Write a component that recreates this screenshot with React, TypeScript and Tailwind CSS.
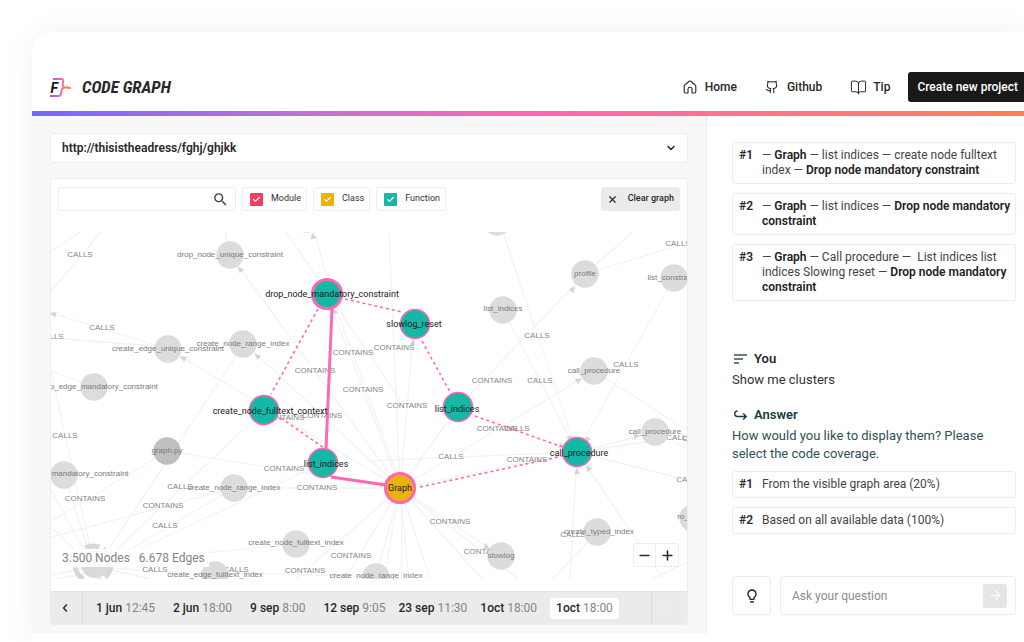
import React from 'react';
import { BookOpen, ChevronDown, ChevronLeft, ChevronRight, Github, Minus, Plus, X, Check, ArrowRight } from 'lucide-react';
import { MdSearch, MdOutlineLightbulb } from 'react-icons/md';

type Line = [number, number, number, number];
type Label = [string, number, number];
type GraphNode = { x: number; y: number; label?: string; lx?: number; ly?: number; dark?: boolean };

const edges: Line[] = [
  [51, 251, 81, 232], [51, 291, 101, 232], [51, 313, 168, 349], [51, 338, 168, 347], [51, 371, 94, 387],
  [51, 371, 95, 570], [225, 232, 230, 255], [315, 232, 327, 280], [286, 232, 400, 400], [239, 267, 400, 488],
  [180, 356, 400, 488], [254, 352, 400, 488], [236, 356, 95, 570], [264, 410, 95, 570], [323, 463, 95, 570],
  [167, 451, 51, 521], [167, 451, 400, 488], [234, 488, 51, 537], [234, 488, 95, 570], [64, 475, 95, 570],
  [51, 490, 95, 570], [51, 527, 95, 570], [51, 575, 95, 566], [51, 580, 95, 572], [150, 579, 95, 566],
  [234, 488, 400, 488], [332, 308, 400, 488], [336, 308, 402, 488], [389, 232, 400, 488], [413, 340, 400, 488],
  [400, 488, 458, 407], [400, 488, 577, 452], [296, 544, 205, 553], [296, 579, 400, 488], [345, 579, 400, 488],
  [376, 577, 400, 488], [384, 579, 400, 488], [401, 488, 402, 579], [400, 488, 409, 579], [400, 488, 430, 579],
  [400, 488, 482, 579], [400, 488, 518, 579], [400, 488, 501, 556], [503, 232, 577, 452], [503, 310, 577, 452],
  [585, 274, 458, 407], [585, 274, 633, 232], [585, 274, 687, 243], [674, 278, 577, 452], [594, 371, 400, 488],
  [594, 371, 687, 430], [577, 452, 655, 432], [577, 452, 687, 436], [577, 452, 687, 480], [577, 452, 570, 579],
  [577, 452, 663, 579], [655, 432, 687, 449], [597, 532, 553, 579], [652, 579, 687, 562], [367, 461, 577, 452],
  [215, 575, 109, 568], [215, 572, 376, 577],
];

const arrows: [number, number, number][] = [
  [240, 269, -38], [257, 356, -50], [183, 358, -60], [53, 314, -75], [313, 236, -15], [334, 311, -20],
  [413, 342, 5], [573, 289, 42], [579, 380, 60], [637, 436, 75], [570, 439, 160], [587, 440, 210],
  [562, 446, 110], [577, 471, 0], [588, 468, -35], [486, 546, -10], [383, 485, 100],
];

const edgeLabels: Label[] = [
  ['CALLS', 80, 254], ['CALLS', 102, 327], ['CALLS', 51, 336], ['CALLS', 678, 243], ['CONTAINS', 353, 352],
  ['CONTAINS', 394, 347], ['CONTAINS', 315, 370], ['CONTAINS', 363, 389], ['CONTAINS', 407, 405],
  ['CONTAINS', 492, 380], ['CALLS', 540, 380], ['CALLS', 537, 335], ['CALLS', 626, 364], ['CONTAINS', 284, 417],
  ['CONTAINS', 322, 415], ['CONTAINS', 497, 428], ['CALLS', 517, 428], ['CALLS', 451, 456], ['CONTAINS', 527, 459],
  ['CALLS', 65, 435], ['CONTAINS', 85, 498], ['CALLS', 180, 486], ['CONTAINS', 163, 505], ['CALLS', 165, 525],
  ['CONTAINS', 284, 468], ['CONTAINS', 317, 487], ['CONTAINS', 450, 521], ['CONTAINS', 484, 551],
  ['CALLS', 573, 534], ['CALLS', 155, 569], ['CALLS', 236, 569], ['CONTAINS', 305, 570], ['CONTAINS', 351, 555],
  ['CALLS', 689, 479], ['CALLS', 679, 437], ['CALLS', 695, 438],
];

const nodes: GraphNode[] = [
  { x: 230, y: 255, label: 'drop_node_unique_constraint', ly: 254 },
  { x: 585, y: 274, label: 'profile', ly: 273 },
  { x: 674, y: 278, label: 'list_constraint', lx: 672, ly: 277 },
  { x: 503, y: 310, label: 'list_indices', ly: 308 },
  { x: 594, y: 371, label: 'call_procedure', ly: 370 },
  { x: 655, y: 432, label: 'call_procedure', ly: 431 },
  { x: 168, y: 349, label: 'create_edge_unique_constraint', ly: 348 },
  { x: 243, y: 344, label: 'create_node_range_index', ly: 343 },
  { x: 94, y: 387, label: 'drop_edge_mandatory_constraint', lx: 98, ly: 386 },
  { x: 167, y: 451, label: 'graph.py', ly: 450, dark: true },
  { x: 64, y: 475, label: 'edge_mandatory_constraint', lx: 79, ly: 473 },
  { x: 234, y: 488, label: 'create_node_range_index', ly: 487 },
  { x: 296, y: 544, label: 'create_node_fulltext_index', ly: 542 },
  { x: 215, y: 575, label: 'create_edge_fulltext_index', ly: 574 },
  { x: 376, y: 577, label: 'create_node_range_index', ly: 575 },
  { x: 501, y: 556, label: 'slowlog', ly: 555 },
  { x: 597, y: 532, label: 'create_typed_index', lx: 599, ly: 531 },
  { x: 693, y: 518, label: 'ro_query', ly: 516 },
  { x: 497, y: 222 },
  { x: 306, y: 219 },
];

const dashed: Line[] = [
  [318, 309, 271, 394], [345, 299, 402, 312], [422, 341, 450, 392], [475, 416, 563, 447],
  [420, 487, 563, 456], [281, 418, 324, 448],
];

const picked = [
  { x: 327, y: 294, label: 'drop_node_mandatory_constraint', lx: 332, wide: true },
  { x: 415, y: 324, label: 'slowlog_reset', lx: 414 },
  { x: 458, y: 407, label: 'list_indices', lx: 457, ly: 409 },
  { x: 264, y: 410, label: 'create_node_fulltext_context', lx: 270, ly: 411 },
  { x: 323, y: 463, label: 'list_indices', lx: 326, ly: 464 },
  { x: 577, y: 452, label: 'call_procedure', lx: 579, ly: 453 },
  { x: 400, y: 488, label: 'Graph', wide: true, amber: true },
] as { x: number; y: number; label: string; lx?: number; ly?: number; wide?: boolean; amber?: boolean }[];

function CodeGraph() {
  return (
    <svg viewBox="51 232 636 347" className="block w-full" role="img" aria-label="Code graph">
      <g stroke="#f3f3f3" strokeWidth="1.3">
        {edges.map(([x1, y1, x2, y2], i) => <line key={i} x1={x1} y1={y1} x2={x2} y2={y2} />)}
      </g>
      {edgeLabels.map(([text, x, y], i) => {
        const w = text === 'CALLS' ? 26 : 41;
        return <rect key={i} x={x - w / 2} y={y - 4} width={w} height="8" fill="#fff" />;
      })}
      <g className="font-['Liberation_Sans',sans-serif] text-[8px]" fill="#858585" textAnchor="middle">
        {edgeLabels.map(([text, x, y], i) => <text key={i} x={x} y={y + 3}>{text}</text>)}
      </g>
      {arrows.map(([x, y, a], i) => (
        <path key={i} d="M0-3.5 3 3h-6z" fill="#d4d4d4" transform={`translate(${x} ${y}) rotate(${a})`} />
      ))}
      <circle cx="93" cy="564" r="18" fill="none" stroke="#d8d8d8" strokeWidth="5" strokeDasharray="15 4" />
      <circle cx="95" cy="564" r="14" fill="#dadada" />
      {nodes.map((n, i) => (
        <circle key={i} cx={n.x} cy={n.y} r="13.7" fill={n.dark ? '#bfbfbf' : '#dcdcdc'} />
      ))}
      <g className="font-['Liberation_Sans',sans-serif] text-[8px]" fill="#7a7a7a" textAnchor="middle">
        {nodes.map((n, i) => n.label && <text key={i} x={n.lx ?? n.x} y={(n.ly ?? n.y) + 3}>{n.label}</text>)}
      </g>
      <g stroke="#ff69b4" fill="none">
        <path d="M332 308 326 449M331 477 386 485" strokeWidth="3" />
        {dashed.map(([x1, y1, x2, y2], i) => (
          <line key={i} x1={x1} y1={y1} x2={x2} y2={y2} strokeWidth="1.6" strokeDasharray="3 3" />
        ))}
      </g>
      {picked.map((n, i) => (
        <circle key={i} cx={n.x} cy={n.y} r="14.6" fill={n.amber ? '#e9b308' : '#15b8a6'} stroke="#ff66b3" strokeWidth={n.wide ? 3 : 1.5} />
      ))}
      <g className="font-['Roboto',sans-serif] text-[9px]" fill="#1a1a1a" textAnchor="middle">
        {picked.map((n, i) => <text key={i} x={n.lx ?? n.x} y={(n.ly ?? n.y) + 3}>{n.label}</text>)}
      </g>
    </svg>
  );
}

function Logo() {
  return (
    <svg viewBox="0 0 21 20" className="h-5 w-[21px]" fill="none" aria-hidden="true">
      <defs>
        <linearGradient id="brand" x1="0" y1="0" x2="21" y2="0" gradientUnits="userSpaceOnUse">
          <stop offset="0" stopColor="#7466ff" />
          <stop offset=".5" stopColor="#ff66b3" />
          <stop offset=".8" stopColor="#ff7a66" />
          <stop offset="1" stopColor="#ff804d" />
        </linearGradient>
      </defs>
      <path d="M3 1h8.500q2 0 1.700 2l-.5 3.500q-.3 2.500 2 3-2.800.7-3.200 3l-.5 3q-.4 2.500-2.800 2.500H0M14 9.600h2l1.300-.7 1 1.100h2.500" stroke="url(#brand)" strokeWidth="1.9" />
      <text x="0.500" y="14.500" fill="#141414" className="font-['Roboto',sans-serif] text-[14px] font-bold italic">F</text>
    </svg>
  );
}

function HomeIcon() {
  return (
    <svg viewBox="0 0 14 14" className="size-3.5" fill="none" stroke="currentColor" strokeWidth="1.100" strokeLinejoin="round" aria-hidden="true">
      <path d="M1.200 6.300Q1.200 5.300 2 4.700L6.200 1.300q.8-.6 1.600 0L12 4.700q.8.6.8 1.600v5.500q0 1.200-1.200 1.200H9V9q0-1.800-2-1.800T5 9v4H2.400q-1.200 0-1.200-1.200z" />
    </svg>
  );
}

function Filter({ label, tone }: { label: string; tone: string }) {
  return (
    <label className="flex h-6 items-center gap-2 rounded-[3px] border border-[#ededed] pr-[5px] pl-[7px] text-[9px] text-[#333]">
      <span className="grid size-[13px] place-items-center">
        <input type="checkbox" defaultChecked className={`peer col-start-1 row-start-1 size-[13px] appearance-none rounded-[1px] ${tone}`} />
        <Check className="pointer-events-none col-start-1 row-start-1 size-[9px] text-white opacity-0 peer-checked:opacity-100" strokeWidth={3} />
      </span>
      {label}
    </label>
  );
}

const times = [
  { day: '1 jun', time: '12:45', pad: true },
  { day: '2 jun', time: '18:00', pad: true },
  { day: '9 sep', time: '8:00', pad: true },
  { day: '12 sep', time: '9:05' },
  { day: '23 sep', time: '11:30' },
  { day: '1oct', time: '18:00' },
];

function PathCard({ n, children }: { n: number; children: React.ReactNode }) {
  return (
    <button className="flex w-full gap-[9px] rounded-[3px] border border-[#ececec] py-[5px] pr-0.5 pl-1.5 text-left text-[12px] leading-[15px] text-[#444]">
      <b className="w-3.5 shrink-0 font-semibold text-[#2a2a2a]">#{n}</b>
      <span className="[&_b]:font-semibold [&_b]:text-[#222]">{children}</span>
    </button>
  );
}

export default function App() {
  return (
    <div className="flex min-h-screen flex-col overflow-hidden bg-white pt-8 pl-8 font-['Roboto',sans-serif] text-[#282828]">
      <div className="flex flex-1 flex-col rounded-tl-[20px] bg-white shadow-[0_0_32px_rgba(0,0,0,0.06)]">
        <header className="flex h-[79px] items-end justify-between pb-[9px] pl-[18px]">
          <a href="#" className="flex h-[30px] items-center gap-[11px] pt-0.5">
            <Logo />
            <span className="font-['Roboto_Condensed','Liberation_Sans_Narrow','Roboto',sans-serif] text-[17px] font-bold italic">CODE GRAPH</span>
          </a>
          <nav className="-mr-[3px] flex items-center text-[12px] font-medium whitespace-nowrap">
            <a href="#" className="mr-7 flex items-center gap-2"><HomeIcon />Home</a>
            <a href="#" className="mr-7 flex items-center gap-2"><Github className="size-3.5" strokeWidth={1.8} />Github</a>
            <a href="#" className="mr-[18px] flex items-center gap-1.5"><BookOpen className="size-[17px]" strokeWidth={1.4} />Tip</a>
            <button className="h-[30px] rounded-l-[3px] bg-[#191919] px-[9px] text-white">Create new project</button>
          </nav>
        </header>
        <div className="h-[5px] shrink-0 bg-linear-to-r from-[#7466ff] via-[#ff66b3] to-[#ff804d]" />

        <main className="flex">
          <section className="min-w-0 flex-1 border-r border-[#e9e9e9] bg-[#f8f8f8] px-[18px] pt-[17px] pb-2">
            <div className="grid items-center">
              <select aria-label="Repository" className="col-start-1 row-start-1 h-[30px] w-full appearance-none rounded-[3px] border border-[#ededed] bg-white px-[11px] text-[12px] font-semibold">
                <option>http://thisistheadress/fghj/ghjkk</option>
              </select>
              <ChevronDown className="pointer-events-none col-start-1 row-start-1 mr-[11px] size-3 justify-self-end" strokeWidth={3} />
            </div>

            <div className="mt-[15px] rounded-[3px] border border-[#ededed] bg-white">
              <div className="flex items-center gap-1.5 px-[7px] pt-2">
                <label className="flex h-6 w-[178px] items-center rounded-[3px] border border-[#ededed] pr-1.5">
                  <input type="text" aria-label="Search" className="min-w-0 flex-1 bg-transparent px-2 text-[10px] outline-none" />
                  <MdSearch className="size-[17px] text-[#444]" />
                </label>
                <Filter label="Module" tone="bg-[#f43f5e]" />
                <Filter label="Class" tone="bg-[#e9b308]" />
                <Filter label="Function" tone="bg-[#15b8a6]" />
                <button className="ml-auto flex h-6 items-center gap-2.5 rounded-[3px] bg-[#ebebeb] px-1.5 text-[9px] font-medium">
                  <X className="size-[11px]" strokeWidth={2.5} />Clear graph
                </button>
              </div>
              <div className="relative mt-[21px]">
                <CodeGraph />
                <div className="absolute bottom-3 left-0 flex h-[18px] items-center gap-[9px] bg-white/90 pr-1 pl-[11px] text-[12px] text-[#858585]">
                  <span>3.500 Nodes</span><span>6.678 Edges</span>
                </div>
                <div className="absolute right-2 bottom-3 flex h-6 divide-x divide-[#ededed] rounded-[3px] border border-[#ededed] bg-white">
                  <button aria-label="Zoom out" className="grid w-[22px] place-items-center"><Minus className="size-[15px]" strokeWidth={2.5} /></button>
                  <button aria-label="Zoom in" className="grid w-[22px] place-items-center"><Plus className="size-[15px]" strokeWidth={2.5} /></button>
                </div>
              </div>
              <div className="mt-3 flex h-[33px] items-stretch rounded-b-[3px] border-t border-[#e2e2e2] bg-[#ebebeb] text-[12px] whitespace-nowrap">
                <button aria-label="Earlier" className="grid w-8 place-items-center border-r border-[#dcdcdc] pr-1"><ChevronLeft className="size-3" strokeWidth={3} /></button>
                <div className="flex flex-1 items-center gap-[13px] pl-[13px]">
                  {times.map((t) => (
                    <button key={t.day} className={t.pad ? 'pr-[5px]' : ''}>
                      <span className="font-medium">{t.day}</span> <span className="text-[#858585]">{t.time}</span>
                    </button>
                  ))}
                  <button className="h-[21px] rounded-[3px] bg-white px-1.5">
                    <span className="font-medium">1oct</span> <span className="text-[#858585]">18:00</span>
                  </button>
                </div>
                <button aria-label="Later" className="grid w-9 place-items-center border-l border-[#dcdcdc] pr-3 text-[#f8f8f8]"><ChevronRight className="size-3" /></button>
              </div>
            </div>
          </section>

          <aside className="flex w-[317px] shrink-0 flex-col pt-[26px] pr-2 pb-[18px] pl-[25px]">
            <div className="flex flex-col gap-[9px]">
              <PathCard n={1}>— <b>Graph</b> — list indices — create node fulltext index — <b>Drop node mandatory constraint</b></PathCard>
              <PathCard n={2}>— <b>Graph</b> — list indices — <b>Drop node mandatory constraint</b></PathCard>
              <PathCard n={3}>— <b>Graph</b> — Call procedure —&nbsp; List indices list indices Slowing reset — <b>Drop node mandatory constraint</b></PathCard>
            </div>

            <div className="mt-[49px] text-[13px] leading-[18px]">
              <h2 className="flex items-center gap-[7px] pl-0.5 font-semibold">
                <svg viewBox="0 0 13 10" className="h-2.5 w-[13px]" stroke="#36565b" strokeWidth="1.500" aria-hidden="true"><path d="M0 1h13M0 5h9M0 9h5" /></svg>
                You
              </h2>
              <p className="mt-[3px] text-[#333]">Show me clusters</p>
              <h2 className="mt-[17px] flex items-center gap-[7px] pl-0.5 font-semibold text-[#173b40]">
                <svg viewBox="0 0 13 11" className="h-[11px] w-[13px]" fill="none" stroke="currentColor" strokeWidth="1.400" aria-hidden="true"><path d="M3.500 1Q.8 1 .8 3.800T3.800 6.500H12M9.200 3.500l3 3-3 3" /></svg>
                Answer
              </h2>
              <p className="mt-[3px] text-[#2f5157]">How would you like to display them? Please select the code coverage.</p>
            </div>
            <div className="mt-2 flex flex-col gap-[9px]">
              <PathCard n={1}>From the visible graph area (20%)</PathCard>
              <PathCard n={2}>Based on all available data (100%)</PathCard>
            </div>

            <form className="mt-auto flex gap-[9px]" onSubmit={(e) => e.preventDefault()}>
              <button type="button" aria-label="Suggestions" className="grid size-[39px] place-items-center rounded-[3px] border border-[#ececec]">
                <MdOutlineLightbulb className="size-4" />
              </button>
              <div className="flex h-[39px] flex-1 items-center rounded-[3px] border border-[#ececec] pr-2 pl-[11px]">
                <input aria-label="Ask your question" placeholder="Ask your question" className="min-w-0 flex-1 text-[12px] outline-none placeholder:text-[#8c8c8c]" />
                <button aria-label="Send" className="grid size-6 place-items-center rounded-[3px] bg-[#e5e5e5] text-white"><ArrowRight className="size-[15px]" strokeWidth={1.8} /></button>
              </div>
            </form>
          </aside>
        </main>
      </div>
    </div>
  );
}
